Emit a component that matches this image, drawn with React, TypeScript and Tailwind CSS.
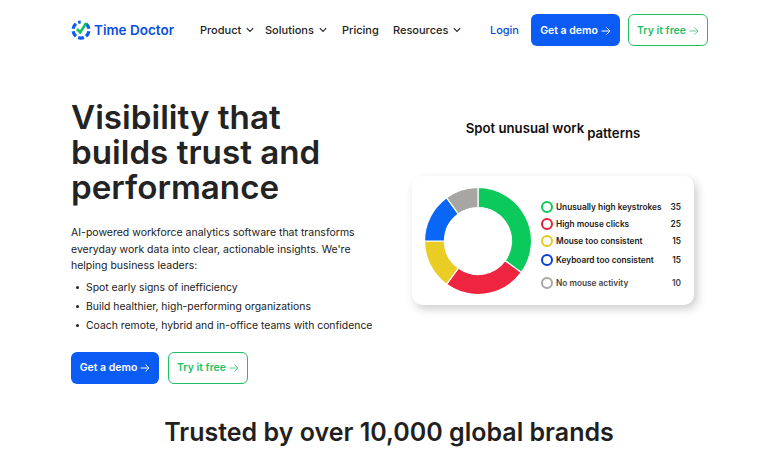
const segs = [
  { from: 0, to: 126, color: "#0cc95c" },
  { from: 126, to: 216, color: "#ee2440" },
  { from: 216, to: 270, color: "#e9cd24" },
  { from: 270, to: 324, color: "#0a66f5" },
  { from: 324, to: 360, color: "#a8a6a3" },
];

function pt(cx: number, cy: number, r: number, deg: number) {
  const a = ((deg - 90) * Math.PI) / 180;
  return `${(cx + r * Math.cos(a)).toFixed(2)} ${(cy + r * Math.sin(a)).toFixed(2)}`;
}

function Donut() {
  const c = 54, R = 53.5, r = 33.5;
  return (
    <svg width="108" height="108" viewBox="0 0 108 108" className="shrink-0">
      {segs.map((s) => {
        const large = s.to - s.from > 180 ? 1 : 0;
        return (
          <path
            key={s.from}
            fill={s.color}
            stroke="#fff"
            strokeWidth="1.2"
            d={`M${pt(c, c, R, s.from)} A${R} ${R} 0 ${large} 1 ${pt(c, c, R, s.to)} L${pt(c, c, r, s.to)} A${r} ${r} 0 ${large} 0 ${pt(c, c, r, s.from)} Z`}
          />
        );
      })}
    </svg>
  );
}

const legend = [
  { label: "Unusually high keystrokes", v: "35", ring: "border-[#0cc95c]", row: "h-[17px]" },
  { label: "High mouse clicks", v: "25", ring: "border-[#e0203c]", row: "h-[17px]" },
  { label: "Mouse too consistent", v: "15", ring: "border-[#e3c925]", row: "h-[17px]" },
  { label: "Keyboard too consistent", v: "15", ring: "border-[#0a3fd6]", row: "h-[21px]" },
  { label: "No mouse activity", v: "10", ring: "border-[#a8a6a3]", row: "h-[25px]", muted: true },
];

function Arrow({ className }: { className?: string }) {
  return (
    <svg width="10" height="10" viewBox="0 0 10 10" fill="none" stroke="currentColor" strokeWidth="1" className={className}>
      <path d="M0.5 5H9M5.5 1.5L9 5L5.5 8.5" />
    </svg>
  );
}

function Chevron() {
  return (
    <svg width="8" height="6" viewBox="0 0 8 6" fill="none" stroke="#222" strokeWidth="1.1">
      <path d="M0.8 1.2L4 4.4L7.2 1.2" />
    </svg>
  );
}

function Buttons({ hero }: { hero?: boolean }) {
  return (
    <>
      <a className={`flex h-8 items-center justify-center gap-[3px] rounded-[6px] bg-[#0a5cf5] pt-[1px] text-[10.5px] font-semibold text-white ${hero ? "w-[88px]" : "w-[89px]"}`}>
        Get a demo <Arrow />
      </a>
      <a className="flex h-8 w-[80px] items-center justify-center gap-[3px] rounded-[6px] border border-[#1fbf63] bg-white pt-[1px] text-[10.5px] font-semibold text-[#1fbf63]">
        Try it free <Arrow className="text-[#5fd18f]" />
      </a>
    </>
  );
}

function Logo() {
  const arcs = [60, 120, 180, 240, 300];
  return (
    <svg width="20" height="20" viewBox="0 0 20 20" fill="none" className="shrink-0">
      <g stroke="#0a5cf5" strokeWidth="3.2">
        {arcs.map((a) => (
          <path key={a} d={`M${pt(10, 10, 8, a - 21)} A8 8 0 0 1 ${pt(10, 10, 8, a + 21)}`} />
        ))}
        <path d={`M${pt(10, 10, 8, 339)} A8 8 0 0 1 ${pt(10, 10, 8, 358)}`} />
      </g>
      <path d="M6 9L9.2 12.4L15.2 3" stroke="#16c25f" strokeWidth="2.6" />
    </svg>
  );
}

export default function App() {
  return (
    <div className="h-[450px] w-[775px] overflow-hidden bg-white font-['Inter',sans-serif] text-[#1f1f1f]">
      <header className="flex h-[60px] items-center pl-[71px] pr-[67px]">
        <div className="flex w-[129px] items-center gap-[3px]">
          <Logo />
          <span className="text-[13.5px] font-semibold text-[#0a4fe0]">Time Doctor</span>
        </div>
        <nav className="flex items-center text-[11px] font-medium text-[#222]">
          <span className="flex w-[65px] items-center gap-[5px]">Product <Chevron /></span>
          <span className="flex w-[77px] items-center gap-[5px]">Solutions <Chevron /></span>
          <span className="w-[51px]">Pricing</span>
          <span className="flex items-center gap-[5px]">Resources <Chevron /></span>
        </nav>
        <div className="ml-auto flex items-center gap-[8px]">
          <span className="mr-[4px] text-[11px] font-medium text-[#0a4fd0]">Login</span>
          <Buttons />
        </div>
      </header>

      <main className="flex pl-[71px] pr-[81px] pt-[40px]">
        <section className="w-[330px] shrink-0">
          <h1 className="text-[33.2px] font-semibold leading-[35px] text-[#232323]">
            Visibility that<br />builds trust and<br />performance
          </h1>
          <p className="mt-[20px] text-[10.5px] leading-[16.5px] text-[#1a1a1a]">
            AI-powered workforce analytics software that transforms<br />
            everyday work data into clear, actionable insights. We're<br />
            helping business leaders:
          </p>
          <ul className="mt-[3px] text-[10.4px] leading-[19px] text-[#1a1a1a]">
            {["Spot early signs of inefficiency", "Build healthier, high-performing organizations", "Coach remote, hybrid and in-office teams with confidence"].map((t) => (
              <li key={t} className="flex items-center gap-[7px] pl-[5px] whitespace-nowrap">
                <span className="h-[3px] w-[3px] rounded-full bg-[#222]" />
                {t}
              </li>
            ))}
          </ul>
          <div className="mt-[17px] flex gap-[9px]">
            <Buttons hero />
          </div>
        </section>
        <section className="ml-[11px] flex-1">
          <h2 className="mt-[19px] flex justify-center gap-[3px] text-[13.2px] font-semibold leading-[18px] text-[#111]">
            <span>Spot unusual work</span>
            <span className="translate-y-[5px]">patterns</span>
          </h2>
          <div className="mt-[39px] flex h-[129px] w-[282px] items-center rounded-[10px] bg-white pl-[12px] pr-[13px] shadow-[3px_4px_10px_rgba(0,0,0,0.2)]">
            <Donut />
            <ul className="ml-[9px] mt-[13px] flex-1 text-[8.3px] font-semibold text-[#222]">
              {legend.map((l) => (
                <li key={l.label} className={`flex items-center ${l.row} ${l.muted ? "text-[#444]" : ""}`}>
                  <span className={`mr-[3px] h-[12px] w-[12px] rounded-full border-2 ${l.ring}`} />
                  <span className="flex-1 whitespace-nowrap">{l.label}</span>
                  <span className="font-semibold">{l.v}</span>
                </li>
              ))}
            </ul>
          </div>
        </section>
      </main>

      <h2 className="mt-[30px] pl-[3px] text-center text-[25px] font-semibold text-[#231f20]">
        Trusted by over 10,000 global brands
      </h2>
    </div>
  );
}
